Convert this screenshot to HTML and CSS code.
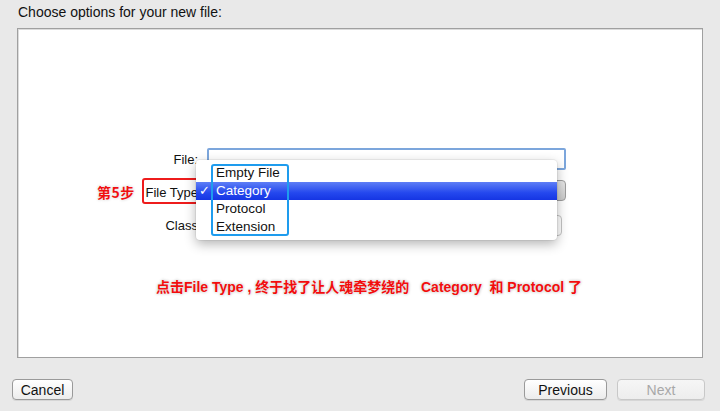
FILE: index.html
```html
<!DOCTYPE html>
<html>
<head>
<meta charset="utf-8">
<link rel="stylesheet" href="styles.css">
</head>
<body>
<div class="title">Choose options for your new file:</div>
<div class="panel">
  <div class="form">
    <div class="label">File:</div>
    <div class="field focus"></div>
    <div class="label">File Type</div>
    <div class="popup"></div>
    <div class="label">Class</div>
    <div class="field combo"></div>
  </div>
  <div class="step">第5步</div>
  <div class="redbox"></div>
  <div class="menu">
    <div class="item">Empty File</div>
    <div class="item sel"><span class="check">✓</span>Category</div>
    <div class="item">Protocol</div>
    <div class="item">Extension</div>
  </div>
  <div class="bluebox"></div>
  <div class="note">点击File Type , 终于找了让人魂牵梦绕的 &nbsp; Category &nbsp;和 Protocol 了</div>
</div>
<div class="footer">
  <button class="btn cancel">Cancel</button>
  <div class="spacer"></div>
  <button class="btn prev">Previous</button>
  <button class="btn next" disabled>Next</button>
</div>
</body>
</html>
```
FILE: styles.css
```css
html, body {
  margin: 0;
  padding: 0;
}
body {
  width: 720px;
  height: 411px;
  overflow: hidden;
  background: #e9e9e9;
  font-family: "Liberation Sans", Arial, sans-serif;
  color: #111;
}
.title {
  height: 28px;
  box-sizing: border-box;
  padding: 4px 0 0 18px;
  font-size: 14px;
  line-height: 16px;
}
.panel {
  position: relative;
  margin-left: 17px;
  width: 686px;
  height: 330px;
  box-sizing: border-box;
  background: #fff;
  border: 1px solid #a0a0a0;
  box-shadow: inset 1px 1px 0 #dcdcdc;
}
.form {
  display: grid;
  grid-template-columns: 182px 359px;
  grid-template-rows: 22px 24px 22px;
  row-gap: 10px;
  column-gap: 7px;
  padding-top: 119px;
  align-items: center;
}
.label {
  text-align: right;
  font-size: 13px;
  line-height: 16px;
  padding-right: 2px;
  padding-top: 2px;
}
.field {
  height: 100%;
  box-sizing: border-box;
  border: 1px solid #b5b5b5;
  background: #fff;
}
.field.focus {
  border: 2px solid #7ca6dc;
  border-radius: 2px;
}
.field.combo {
  width: 355px;
  height: 21px;
  align-self: end;
  border-radius: 4px;
  border-color: #c4c4c4;
}
.popup {
  height: 21px;
  align-self: start;
  border-radius: 4px;
  border: 1px solid #9d9d9d;
  box-sizing: border-box;
  background: linear-gradient(#e6e6e6, #c9c9c9);
}
.step {
  position: absolute;
  left: 79px;
  top: 154px;
  font-size: 14px;
  letter-spacing: 0.5px;
  font-weight: bold;
  color: #f01010;
  font-family: "Noto Sans CJK SC", "Liberation Sans", sans-serif;
  line-height: 18px;
  text-shadow: 0 0 2px #fff, 0 0 3px #bbb;
}
.redbox {
  position: absolute;
  left: 124px;
  top: 149px;
  width: 54px;
  height: 22px;
  border: 2px solid #ee1c1c;
  border-radius: 3px;
}
.menu {
  position: absolute;
  left: 178px;
  top: 131px;
  width: 361px;
  height: 80px;
  box-sizing: border-box;
  padding-top: 4px;
  background: #fff;
  border-radius: 4px;
  box-shadow: 0 4px 12px rgba(0,0,0,0.3), 0 0 0 1px rgba(0,0,0,0.05);
}
.item {
  position: relative;
  height: 18px;
  line-height: 18px;
  padding-left: 20px;
  font-size: 13.5px;
  color: #111;
}
.item.sel {
  color: #fff;
  background: linear-gradient(#5e7ef6, #2448ee 60%, #1535e3);
}
.check {
  position: absolute;
  left: 3px;
  top: 0;
  font-family: "DejaVu Sans", sans-serif;
  font-weight: bold;
  font-size: 13px;
}
.bluebox {
  position: absolute;
  left: 193px;
  top: 135px;
  width: 74px;
  height: 68px;
  border: 2px solid #1e9cee;
  border-radius: 3px;
}
.note {
  position: absolute;
  left: 138px;
  top: 249px;
  font-size: 14px;
  font-weight: bold;
  line-height: 18px;
  color: #f20d0d;
  white-space: nowrap;
  font-family: "Liberation Sans", "Noto Sans CJK SC", sans-serif;
  text-shadow: 0 0 2px #fff, 0 0 3px #999;
}
.footer {
  display: flex;
  align-items: center;
  gap: 10px;
  padding: 21px 15px 0 12px;
}
.spacer {
  flex: 1;
}
.btn {
  height: 21px;
  box-sizing: border-box;
  padding: 0;
  font-family: "Liberation Sans Narrow", "Liberation Sans", Arial, sans-serif;
  font-size: 14px;
  color: #111;
  border: 1px solid #9a9a9a;
  border-radius: 4px;
  background: linear-gradient(#ffffff, #ececec);
  box-shadow: 0 1px 0 rgba(0,0,0,0.08);
}
.cancel { width: 61px; }
.prev { width: 83px; }
.next {
  width: 88px;
  color: #a8a8a8;
  border-color: #c8c8c8;
  background: linear-gradient(#f6f6f6, #ededed);
}
```
